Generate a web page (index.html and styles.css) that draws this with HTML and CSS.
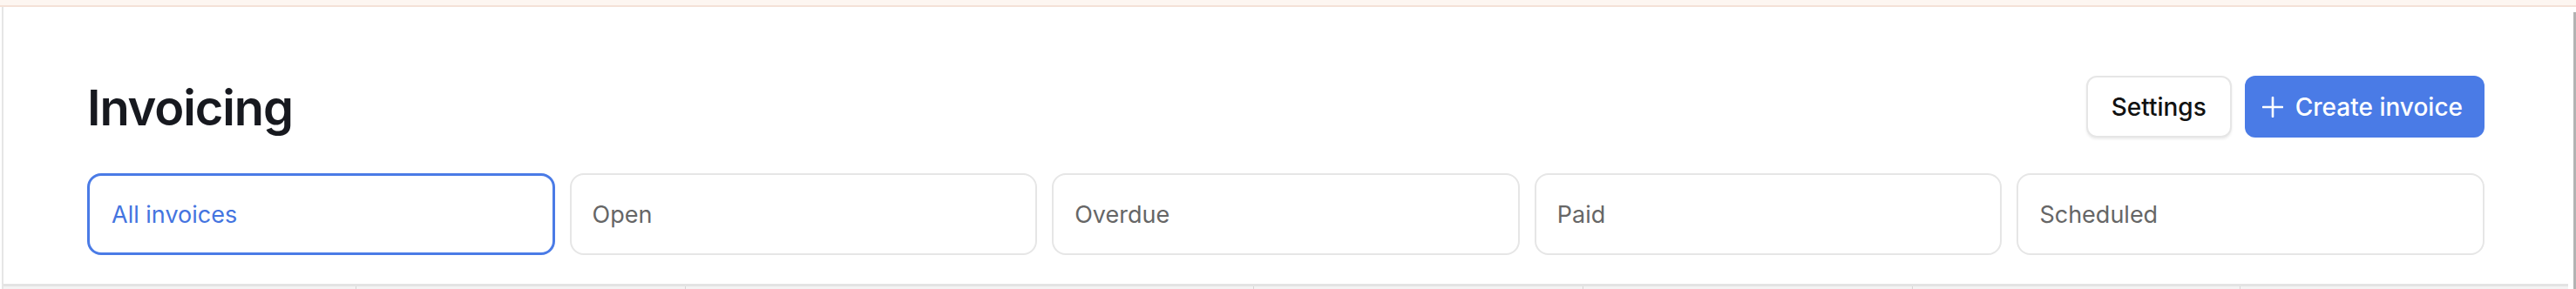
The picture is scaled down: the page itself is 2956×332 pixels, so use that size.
FILE: index.html
```html
<!DOCTYPE html>
<html lang="en">
<head>
<meta charset="utf-8">
<title>Invoicing</title>
<link rel="stylesheet" href="styles.css">
</head>
<body>
<div class="topbar"></div>
<div class="frame">
  <main class="panel">
    <div class="page">
      <header class="header">
        <h1 class="title">Invoicing</h1>
        <div class="actions">
          <button class="btn btn-secondary" type="button">Settings</button>
          <button class="btn btn-primary" type="button">
            <svg class="plus" viewBox="0 0 24 24" width="24" height="24" aria-hidden="true"><path d="M12 1v22M1 12h22" fill="none" stroke="#fff" stroke-width="2.6" stroke-linecap="round"/></svg>
            <span>Create invoice</span>
          </button>
        </div>
      </header>
      <nav class="tabs">
        <a class="tab tab-active" href="#">All invoices</a>
        <a class="tab" href="#">Open</a>
        <a class="tab" href="#">Overdue</a>
        <a class="tab" href="#">Paid</a>
        <a class="tab" href="#">Scheduled</a>
      </nav>
    </div>
    <div class="table-head">
      <div class="col"></div>
      <div class="col"></div>
      <div class="col"></div>
      <div class="col"></div>
      <div class="col"></div>
      <div class="col"></div>
      <div class="col"></div>
    </div>
  </main>
  <div class="edge"><div class="edge-bar"></div></div>
</div>
</body>
</html>
```
FILE: styles.css
```css
* { box-sizing: border-box; }
html, body { margin: 0; padding: 0; background: #ffffff; }
body {
  font-family: Inter, "Noto Sans", "Liberation Sans", sans-serif;
  color: #17191f;
  height: 332px;
  overflow: hidden;
}
.topbar {
  height: 8px;
  background: #fdf6f1;
  border-bottom: 2px solid #f4e1d7;
}
.frame {
  display: flex;
  height: 324px;
}
.panel {
  flex: 1;
  margin-left: 2px;
  border-left: 2px solid #e6e6e6;
  display: flex;
  flex-direction: column;
}
.page {
  padding: 79px 96px 0 96px;
}
.header {
  display: flex;
  justify-content: space-between;
  align-items: center;
  height: 71px;
}
.title {
  margin: 4px 0 0 0;
  font-size: 56px;
  font-weight: 600;
  letter-spacing: -0.02em;
  line-height: 71px;
  color: #17191f;
}
.actions {
  display: flex;
  gap: 15px;
  align-items: stretch;
  height: 71px;
}
.btn {
  font-family: Inter, "Noto Sans", "Liberation Sans", sans-serif;
  font-size: 28px;
  font-weight: 500;
  border-radius: 12px;
  display: flex;
  align-items: center;
  white-space: nowrap;
  cursor: pointer;
}
.btn-secondary {
  background: #ffffff;
  color: #111111;
  border: 2px solid #e6e6e6;
  box-shadow: 0 2px 3px rgba(0, 0, 0, 0.08);
  padding: 0 27px;
}
.btn-primary {
  background: #4a7be6;
  color: #ffffff;
  border: none;
  padding: 0 25px 0 20px;
  gap: 14px;
}
.plus { display: block; flex: none; }
.tabs {
  margin-top: 41px;
  display: grid;
  grid-template-columns: repeat(5, 1fr);
  gap: 17px;
}
.tab {
  height: 94px;
  display: flex;
  align-items: center;
  padding: 0 24px;
  border: 2px solid #e6e6e6;
  border-radius: 16px;
  font-size: 27px;
  font-weight: 400;
  color: #666666;
  text-decoration: none;
}
.tab-active {
  border: 3px solid #4a7be6;
  color: #4474e0;
  padding-left: 25px;
}
.table-head {
  margin-top: 33px;
  flex: 1;
  display: grid;
  grid-template-columns: 404px 378px 652px 378px 378px 376px 1fr;
  background: #f3f3f3;
  border-top: 3px solid #e3e3e3;
}
.col + .col { border-left: 1px solid #d6d6d6; }
.edge {
  width: 9px;
  display: flex;
  justify-content: flex-end;
  padding-top: 6px;
}
.edge-bar {
  width: 3px;
  background: #b3b3b3;
}
```
